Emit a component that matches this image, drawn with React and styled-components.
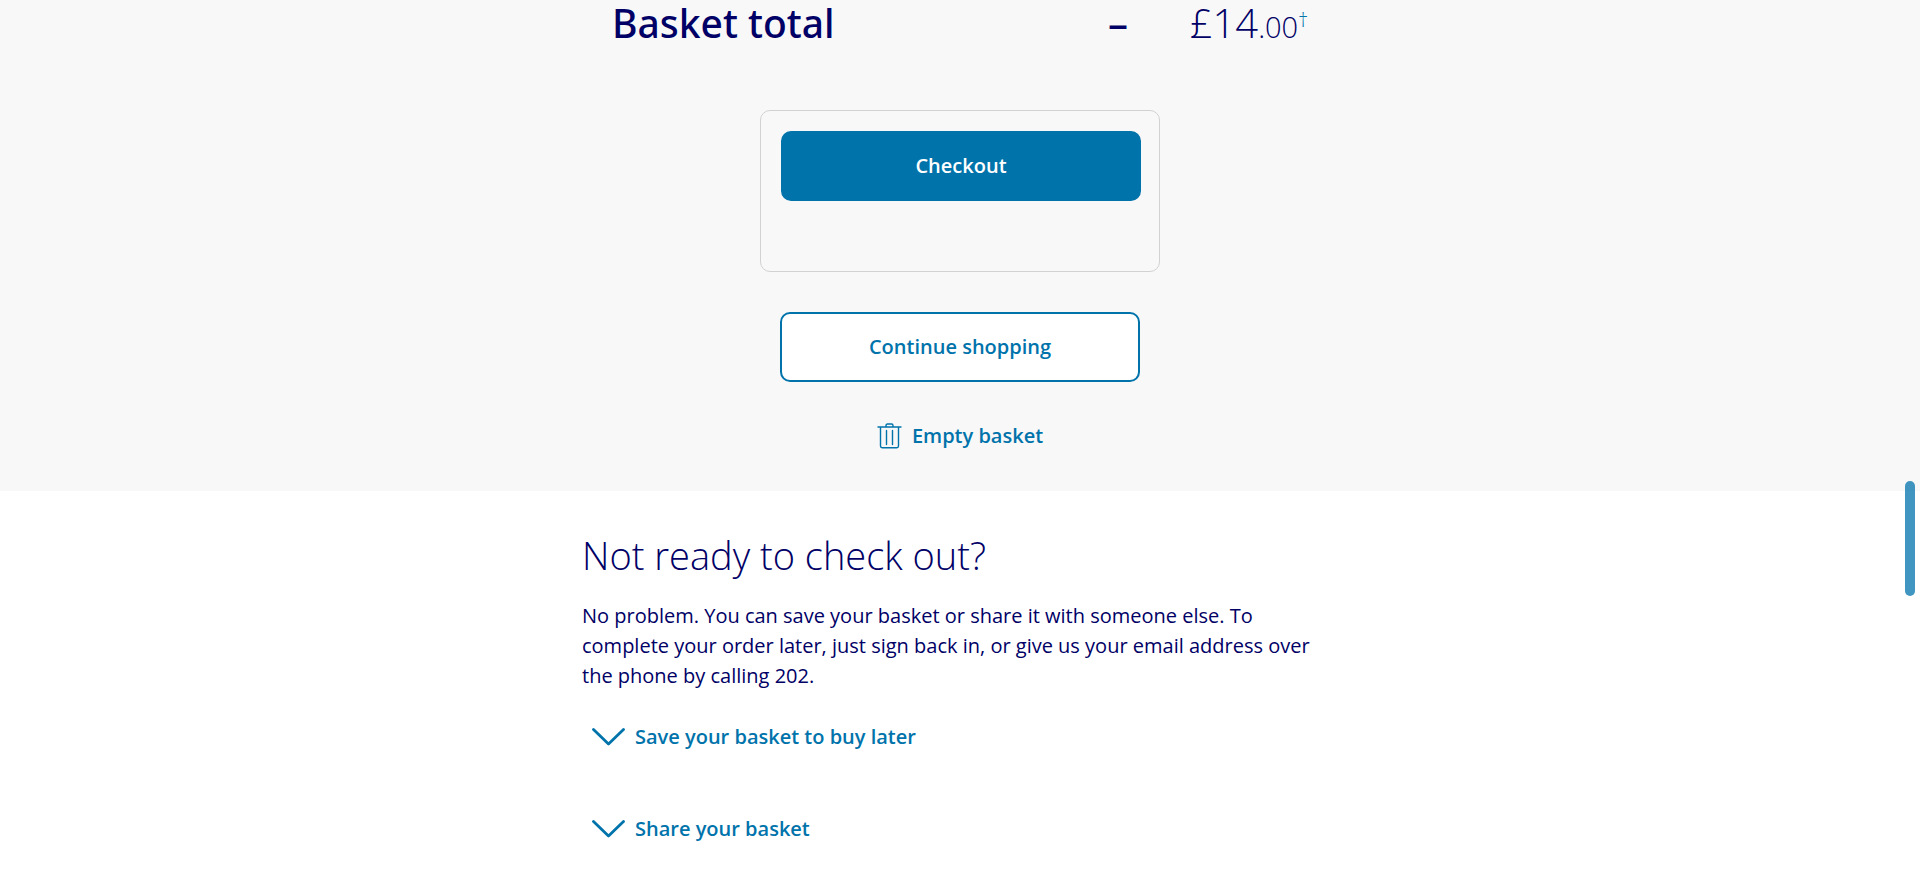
import React, { useState } from "react";
import styled, { createGlobalStyle, css } from "styled-components";

const navy = "#000066";
const blue = "#0073ab";

const GlobalStyle = createGlobalStyle`
  *, *::before, *::after { box-sizing: border-box; }
  body {
    margin: 0;
    background: #fff;
    color: ${navy};
    font-family: "Open Sans", "Noto Sans", sans-serif;
    font-size: 20px;
    line-height: 30px;
  }
  h2, p { margin: 0; }
  button { font: inherit; cursor: pointer; }
`;

const BasketSummary = styled.section`
  background: #f8f8f8;
  padding-bottom: 40px;
`;

const Container = styled.div`
  max-width: 756px;
  margin: 0 auto;
`;

const TotalRow = styled.div`
  display: grid;
  grid-template-columns: 1fr auto 180px;
  align-items: baseline;
  padding: 0 30px;
  font-size: 40px;
  line-height: 46px;
`;

const TotalLabel = styled.h2`
  font-family: "Noto Sans", sans-serif;
  font-size: 39px;
  font-weight: 500;
`;

const Dash = styled.span`
  font-family: "Noto Sans", sans-serif;
  font-weight: 500;
`;

const Price = styled.span`
  font-weight: 300;
  text-align: right;
`;

const Pence = styled.span`
  font-size: 29px;
  line-height: 0;
`;

const Footnote = styled.a`
  color: ${blue};
  font-size: 20px;
  line-height: 0;
  vertical-align: 11px;
  text-decoration: none;
`;

const Actions = styled.div`
  display: flex;
  flex-direction: column;
  align-items: center;
  padding-top: 64px;
`;

const CheckoutCard = styled.div`
  width: 100%;
  max-width: 400px;
  min-height: 162px;
  margin-bottom: 40px;
  padding: 20px 0 20px 20px;
  border: 1px solid #d2d2d2;
  border-radius: 10px;
`;

const ActionButton = styled.button`
  display: block;
  width: 360px;
  max-width: 100%;
  height: 70px;
  border: 2px solid ${blue};
  border-radius: 10px;
  font-weight: 600;
  ${({ $primary }) =>
    $primary
      ? css`background: ${blue}; color: #fff;`
      : css`background: #fff; color: ${blue};`}
`;

const LinkButton = styled.button`
  display: flex;
  align-items: center;
  gap: 10px;
  padding: 0;
  border: 0;
  background: none;
  color: ${blue};
  font-weight: 600;
`;

const EmptyButton = styled(LinkButton)`
  margin-top: 39px;
`;

const SaveSection = styled.section`
  padding: 40px 0;
`;

const Heading = styled.h2`
  font-size: 38px;
  font-weight: 300;
  line-height: 48px;
  margin-bottom: 22px;
`;

const Options = styled.div`
  display: flex;
  flex-direction: column;
  align-items: flex-start;
  gap: 62px;
  padding: 31px 10px 0;
`;

const ScrollThumb = styled.div`
  position: fixed;
  top: 481px;
  right: 5px;
  width: 10px;
  height: 115px;
  border-radius: 5px;
  background: ${blue};
  opacity: 0.75;
`;

function BinIcon() {
  return (
    <svg width="25" height="26" viewBox="0 0 25 26" fill="none" stroke={blue} strokeWidth="1.4" strokeLinecap="round" aria-hidden="true">
      <path d="M1 4h23M9 4V2.5Q9 1 10.500 1h4Q16 1 16 2.500V4M3.500 4v19q0 1.700 1.700 1.700h14.600q1.700 0 1.700-1.700V4M9.500 7.500v14M15.500 7.500v14" />
    </svg>
  );
}

function ChevronIcon() {
  return (
    <svg width="33" height="18" viewBox="0 0 33 18" fill="none" stroke={blue} strokeWidth="2.800" strokeLinecap="round" strokeLinejoin="round" aria-hidden="true">
      <path d="M1.500 1.500L16.500 16L31.500 1.500" />
    </svg>
  );
}

function Option({ label }) {
  const [open, setOpen] = useState(false);
  return (
    <LinkButton type="button" aria-expanded={open} onClick={() => setOpen(!open)}>
      <ChevronIcon />
      {label}
    </LinkButton>
  );
}

export default function App() {
  return (
    <>
      <GlobalStyle />
      <main>
        <BasketSummary>
          <Container>
            <TotalRow>
              <TotalLabel>Basket total</TotalLabel>
              <Dash>–</Dash>
              <Price>
                £14<Pence>.00</Pence>
                <Footnote href="#terms">†</Footnote>
              </Price>
            </TotalRow>
            <Actions>
              <CheckoutCard>
                <ActionButton type="button" $primary>Checkout</ActionButton>
              </CheckoutCard>
              <ActionButton type="button">Continue shopping</ActionButton>
              <EmptyButton type="button">
                <BinIcon />
                Empty basket
              </EmptyButton>
            </Actions>
          </Container>
        </BasketSummary>
        <SaveSection>
          <Container>
            <Heading>Not ready to check out?</Heading>
            <p>
              No problem. You can save your basket or share it with someone else. To complete your
              order later, just sign back in, or give us your email address over the phone by
              calling 202.
            </p>
            <Options>
              <Option label="Save your basket to buy later" />
              <Option label="Share your basket" />
            </Options>
          </Container>
        </SaveSection>
      </main>
      <ScrollThumb />
    </>
  );
}
